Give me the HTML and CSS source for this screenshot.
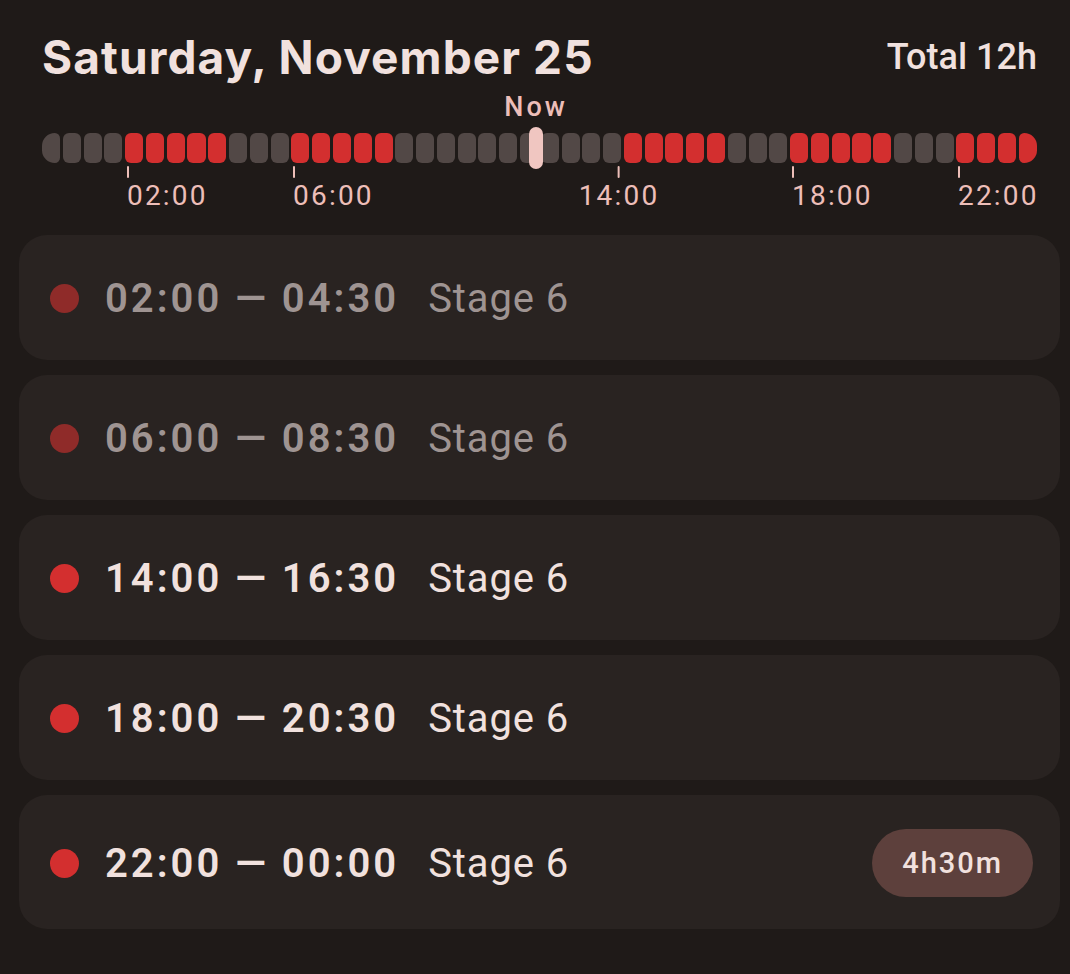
FILE: index.html
```html
<!DOCTYPE html>
<html lang="en">
<head>
<meta charset="utf-8">
<title>Schedule</title>
<link rel="stylesheet" href="styles.css">
</head>
<body>
<main class="screen">
  <header class="head">
    <h1 class="title">Saturday, November 25</h1>
    <div class="total">Total 12h</div>
  </header>

  <section class="timeline">
    <div class="now-row">
      <span class="now-label" style="left:49.65%">Now</span>
    </div>
    <div class="bar">
      <span class="seg first"></span><span class="seg"></span><span class="seg"></span><span class="seg"></span>
      <span class="seg on"></span><span class="seg on"></span><span class="seg on"></span><span class="seg on"></span><span class="seg on"></span>
      <span class="seg"></span><span class="seg"></span><span class="seg"></span>
      <span class="seg on"></span><span class="seg on"></span><span class="seg on"></span><span class="seg on"></span><span class="seg on"></span>
      <span class="seg"></span><span class="seg"></span><span class="seg"></span><span class="seg"></span><span class="seg"></span><span class="seg"></span><span class="seg"></span><span class="seg"></span><span class="seg"></span><span class="seg"></span><span class="seg"></span>
      <span class="seg on"></span><span class="seg on"></span><span class="seg on"></span><span class="seg on"></span><span class="seg on"></span>
      <span class="seg"></span><span class="seg"></span><span class="seg"></span>
      <span class="seg on"></span><span class="seg on"></span><span class="seg on"></span><span class="seg on"></span><span class="seg on"></span>
      <span class="seg"></span><span class="seg"></span><span class="seg"></span>
      <span class="seg on"></span><span class="seg on"></span><span class="seg on"></span><span class="seg on last"></span>
    </div>
    <span class="now-marker" style="left:49.65%"></span>
    <div class="axis">
      <div class="tick" style="left:8.54%"><span class="tick-line"></span><span class="tick-text">02:00</span></div>
      <div class="tick" style="left:25.23%"><span class="tick-line"></span><span class="tick-text">06:00</span></div>
      <div class="tick center" style="left:57.99%"><span class="tick-line"></span><span class="tick-text">14:00</span></div>
      <div class="tick" style="left:75.38%"><span class="tick-line"></span><span class="tick-text">18:00</span></div>
      <div class="tick" style="left:92.06%"><span class="tick-line"></span><span class="tick-text">22:00</span></div>
    </div>
  </section>

  <section class="list">
    <div class="card past">
      <span class="dot"></span>
      <span class="time">02:00 — 04:30</span>
      <span class="stage">Stage 6</span>
    </div>
    <div class="card past">
      <span class="dot"></span>
      <span class="time">06:00 — 08:30</span>
      <span class="stage">Stage 6</span>
    </div>
    <div class="card">
      <span class="dot"></span>
      <span class="time">14:00 — 16:30</span>
      <span class="stage">Stage 6</span>
    </div>
    <div class="card">
      <span class="dot"></span>
      <span class="time">18:00 — 20:30</span>
      <span class="stage">Stage 6</span>
    </div>
    <div class="card">
      <span class="dot"></span>
      <span class="time">22:00 — 00:00</span>
      <span class="stage">Stage 6</span>
      <span class="badge">4h30m</span>
    </div>
  </section>
</main>
</body>
</html>
```

FILE: styles.css
```css
* { box-sizing: border-box; }

html, body {
  margin: 0;
  padding: 0;
  background: #1f1a18;
}

body {
  font-family: Roboto, "Noto Sans", sans-serif;
  color: #f1e1de;
}

.screen {
  width: 1041px;
  margin-left: 19px;
  padding-top: 29px;
}

.head {
  display: flex;
  align-items: center;
  justify-content: space-between;
  padding: 0 23px;
}

.title {
  margin: 0;
  font-family: Inter, "Open Sans", sans-serif;
  font-weight: 700;
  font-size: 46px;
  line-height: 56px;
  letter-spacing: 1.1px;
  color: #f1e1de;
}

.total {
  font-size: 36px;
  font-weight: 500;
  line-height: 40px;
  color: #f1e1de;
}

.timeline {
  position: relative;
  margin: 0 23px;
}

.now-row {
  position: relative;
  height: 48px;
}

.now-label {
  position: absolute;
  top: 7px;
  transform: translateX(-50%);
  font-size: 27px;
  font-weight: 500;
  line-height: 30px;
  letter-spacing: 3px;
  color: #edbeb8;
}

.bar {
  display: flex;
  gap: 2.75px;
  height: 30px;
}

.seg {
  flex: 1;
  border-radius: 6px;
  background: #524846;
}

.seg.on { background: #d32f2f; }
.seg.first { border-radius: 15px 6px 6px 15px; }
.seg.last { border-radius: 6px 15px 15px 6px; }

.now-marker {
  position: absolute;
  top: 42px;
  width: 14px;
  height: 42px;
  border-radius: 7px;
  transform: translateX(-50%);
  background: #f0c6c1;
}

.axis {
  position: relative;
  height: 47px;
}

.tick {
  position: absolute;
  top: 3px;
  display: flex;
  flex-direction: column;
  align-items: flex-start;
}

.tick.center {
  align-items: center;
  transform: translateX(-50%);
}

.tick-line {
  width: 2px;
  height: 12px;
  background: #edbeb8;
  border-radius: 1px;
}

.tick-text {
  margin-top: 3px;
  font-size: 28px;
  line-height: 30px;
  letter-spacing: 2.2px;
  color: #edbeb8;
}

.list {
  display: flex;
  flex-direction: column;
  gap: 15px;
  margin-top: 25px;
}

.card {
  display: flex;
  align-items: center;
  min-height: 125px;
  padding: 34px 27px 32px 31px;
  border-radius: 28px;
  background: #292321;
}

.dot {
  width: 29px;
  height: 29px;
  border-radius: 50%;
  background: #d32f2f;
  flex: none;
}

.time {
  margin-left: 26px;
  font-size: 40px;
  font-weight: 600;
  line-height: 59px;
  letter-spacing: 3px;
  color: #f1e1de;
}

.stage {
  margin-left: 29px;
  font-size: 40px;
  font-weight: 400;
  line-height: 59px;
  letter-spacing: 0.9px;
  color: #f1e1de;
}

.card.past .dot { background: #8f2b29; }
.card.past .time,
.card.past .stage { color: #9f9492; }

.badge {
  margin-left: auto;
  height: 68px;
  padding: 0 30px;
  display: flex;
  align-items: center;
  border-radius: 34px;
  background: #5d403c;
  font-size: 29px;
  font-weight: 500;
  letter-spacing: 2px;
  color: #f1e1de;
}
```
